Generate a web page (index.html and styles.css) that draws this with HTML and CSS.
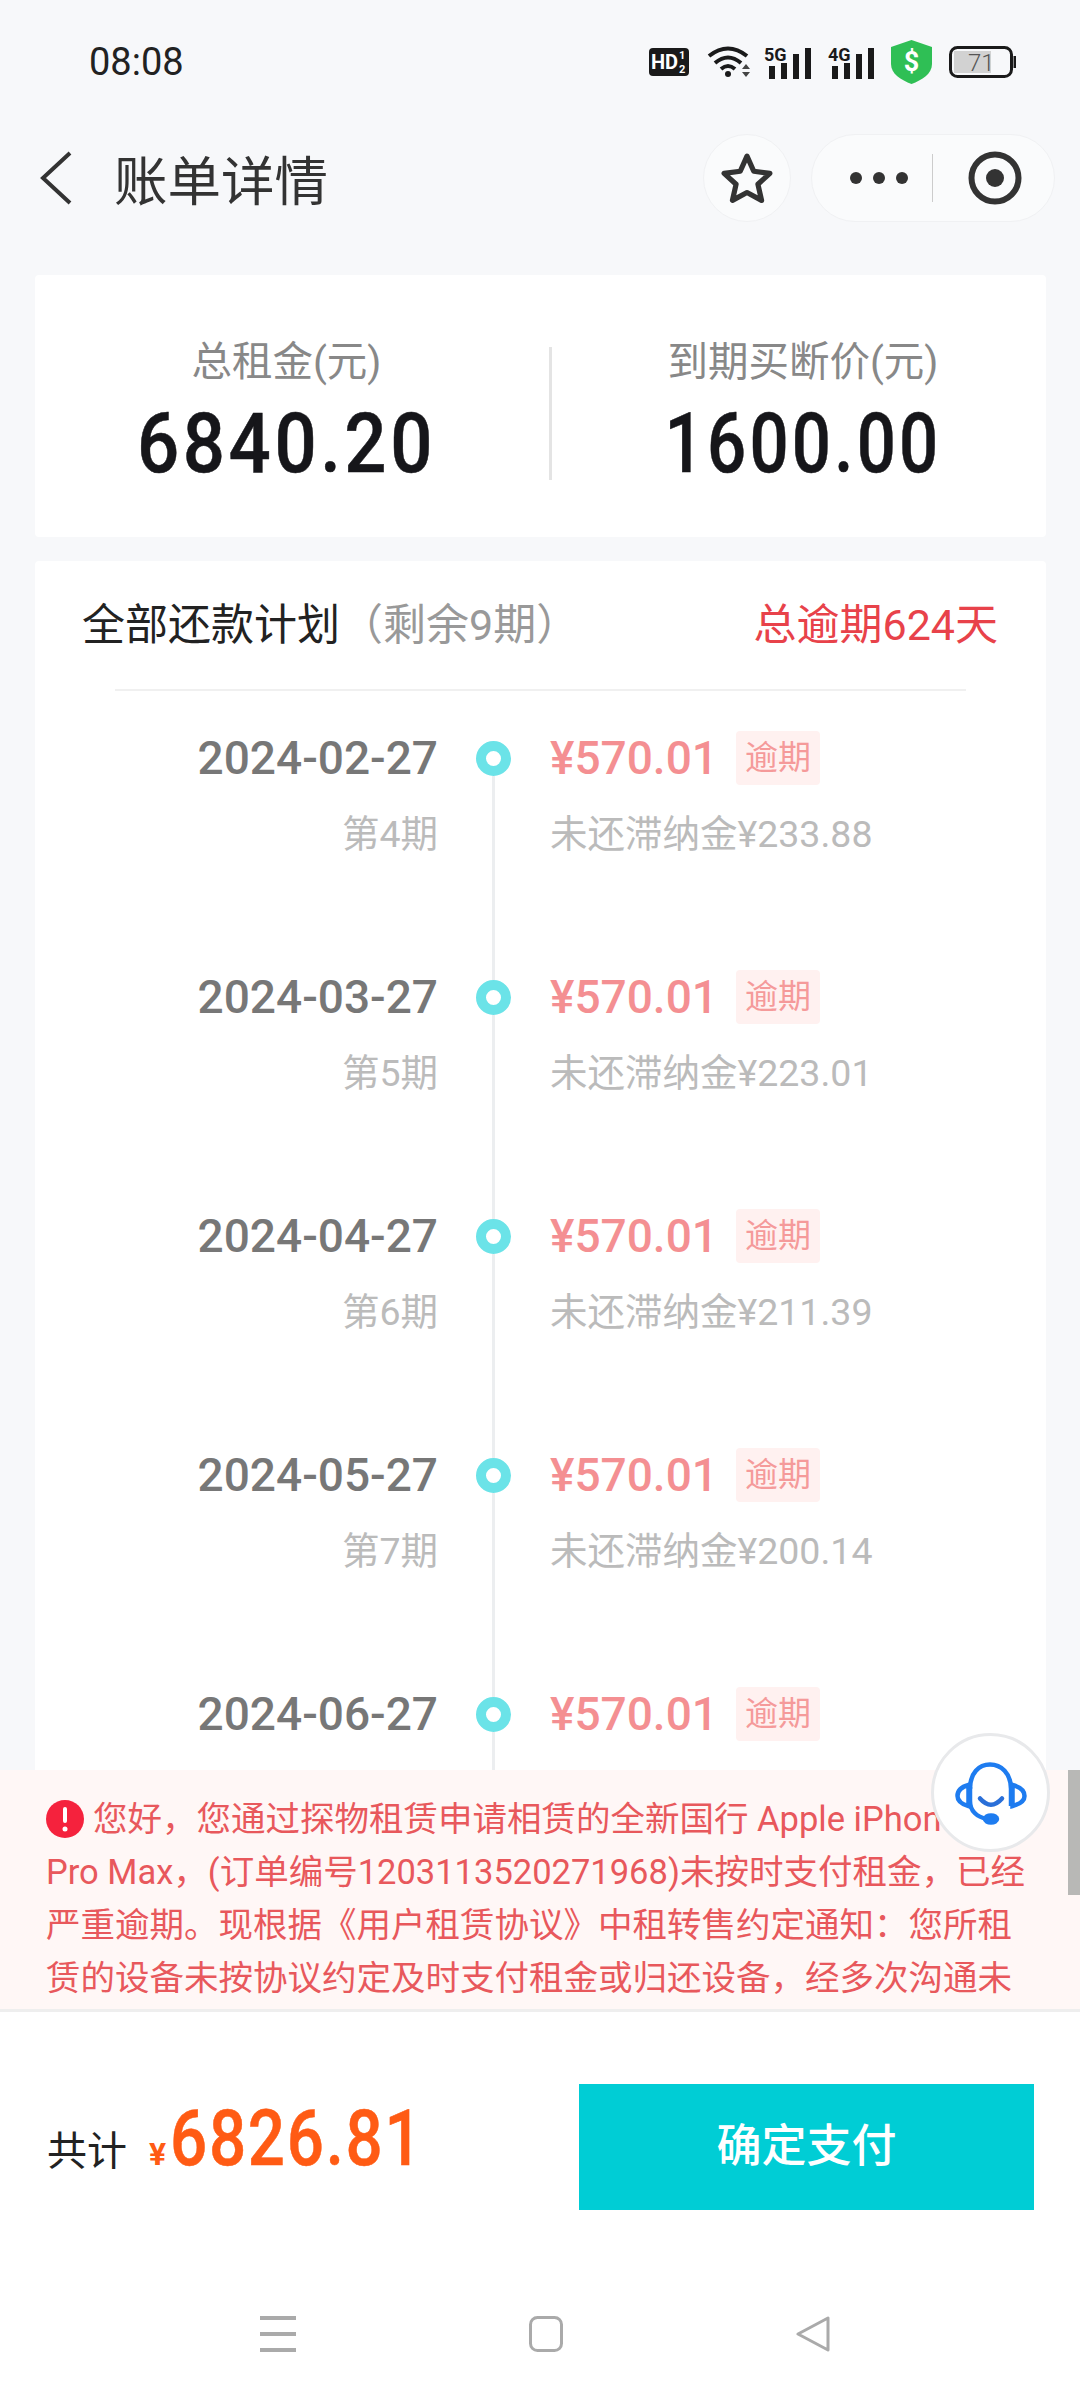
FILE: index.html
```html
<!DOCTYPE html>
<html lang="zh-CN">
<head>
  <meta charset="UTF-8">
  <title>账单详情</title>
  <link rel="stylesheet" href="styles.css">
</head>
<body>
<div class="phone">

  <div class="status">
    <span class="clock">08:08</span>
    <div class="status-icons">
      <svg class="ic-hd" width="40" height="28" viewBox="0 0 40 28">
        <rect width="40" height="28" rx="4" fill="#1a1a1a"/>
        <text x="2" y="21" class="ic-text" font-size="20" fill="#fff">HD</text>
        <text x="30" y="11" class="ic-text" font-size="11" fill="#fff">1</text>
        <text x="30" y="25" class="ic-text" font-size="11" fill="#fff">2</text>
      </svg>
      <svg class="ic-wifi" width="44" height="34" viewBox="0 0 44 34" fill="none" stroke="#1a1a1a" stroke-width="4">
        <path d="M2 11Q21-4 40 11"/>
        <path d="M8 18Q21 7 34 18"/>
        <path d="M14 24Q21 18 28 24"/>
        <circle cx="21" cy="29" r="3" fill="#1a1a1a" stroke="none"/>
        <path d="M39 19l-4 5h8zM35 27h8l-4 5z" fill="#444" stroke="none"/>
      </svg>
      <svg class="ic-signal" width="47" height="37" viewBox="0 -4 47 37">
        <text x="0" y="15" class="ic-text" font-size="18" fill="#1a1a1a">5G</text>
        <path d="M5 20h6v13H5zM17 17h6v16h-6zM29 8h6v25h-6zM41 2h6v31h-6z" fill="#1a1a1a"/>
      </svg>
      <svg class="ic-signal" width="46" height="37" viewBox="0 -4 46 37">
        <text x="0" y="15" class="ic-text" font-size="18" fill="#1a1a1a">4G</text>
        <path d="M4 20h6v13H4zM16 17h6v16h-6zM28 8h6v25h-6zM40 2h6v31h-6z" fill="#1a1a1a"/>
      </svg>
      <svg width="41" height="44" viewBox="0 0 41 44">
        <path d="M20.5 0L41 7V24C41 34 31 40 20.5 44C10 40 0 34 0 24V7Z" fill="#2fbf55"/>
        <text x="20.5" y="31" text-anchor="middle" class="ic-text" font-size="27" fill="#fff">$</text>
      </svg>
      <svg width="67" height="32" viewBox="0 0 67 32">
        <rect x="5" y="5" width="37" height="22" fill="#d2d2d2"/>
        <rect x="1.5" y="1.5" width="61" height="29" rx="7" fill="none" stroke="#1a1a1a" stroke-width="3"/>
        <rect x="64.5" y="10" width="2.5" height="12" fill="#1a1a1a"/>
        <text x="19" y="25" class="ic-batt" font-size="24" fill="#555">71</text>
      </svg>
    </div>
  </div>

  <div class="nav">
    <svg class="nav-back" width="32" height="54" viewBox="0 0 32 54" fill="none" stroke="#333" stroke-width="4">
      <path d="M30 2L3 27l27 25"/>
    </svg>
    <span class="nav-title">账单详情</span>
    <div class="nav-star">
      <svg width="52" height="52" viewBox="0 0 50 50" fill="none" stroke="#333" stroke-width="5" stroke-linejoin="round">
        <path d="M25 4l6.500 14.500 15.500 2-11.500 10.500 3.500 15.500L25 39l-14 7.500L14.500 31 3 20.500l15.500-2z"/>
      </svg>
    </div>
    <div class="capsule">
      <div class="capsule-dots"><i></i><i></i><i></i></div>
      <div class="capsule-line"></div>
      <svg class="capsule-target" width="54" height="54" viewBox="0 0 54 54">
        <circle cx="27" cy="27" r="23.500" fill="none" stroke="#333" stroke-width="6"/>
        <circle cx="27" cy="27" r="9" fill="#333"/>
      </svg>
    </div>
  </div>

  <div class="main">
    <div class="card stats">
      <div class="stat stat-left">
        <div class="stat-label">总租金(元)</div>
        <div class="stat-num">6840.20</div>
      </div>
      <div class="stat-line"></div>
      <div class="stat stat-right">
        <div class="stat-label">到期买断价(元)</div>
        <div class="stat-num">1600.00</div>
      </div>
    </div>

    <div class="card plan">
      <div class="plan-head">
        <span class="plan-title">全部还款计划<span class="plan-left">（剩余9期）</span></span>
        <span class="plan-late">总逾期624天</span>
      </div>
      <div class="plan-line"></div>

      <div class="row">
        <div class="row-date"><div class="date">2024-02-27</div><div class="sub">第4期</div></div>
        <div class="axis"><div class="dot"></div><div class="axis-line"></div></div>
        <div class="row-money">
          <div class="money-top"><span class="amount">¥570.01</span><span class="tag">逾期</span></div>
          <div class="sub">未还滞纳金¥233.88</div>
        </div>
      </div>
      <div class="row">
        <div class="row-date"><div class="date">2024-03-27</div><div class="sub">第5期</div></div>
        <div class="axis"><div class="dot"></div><div class="axis-line"></div></div>
        <div class="row-money">
          <div class="money-top"><span class="amount">¥570.01</span><span class="tag">逾期</span></div>
          <div class="sub">未还滞纳金¥223.01</div>
        </div>
      </div>
      <div class="row">
        <div class="row-date"><div class="date">2024-04-27</div><div class="sub">第6期</div></div>
        <div class="axis"><div class="dot"></div><div class="axis-line"></div></div>
        <div class="row-money">
          <div class="money-top"><span class="amount">¥570.01</span><span class="tag">逾期</span></div>
          <div class="sub">未还滞纳金¥211.39</div>
        </div>
      </div>
      <div class="row">
        <div class="row-date"><div class="date">2024-05-27</div><div class="sub">第7期</div></div>
        <div class="axis"><div class="dot"></div><div class="axis-line"></div></div>
        <div class="row-money">
          <div class="money-top"><span class="amount">¥570.01</span><span class="tag">逾期</span></div>
          <div class="sub">未还滞纳金¥200.14</div>
        </div>
      </div>
      <div class="row">
        <div class="row-date"><div class="date">2024-06-27</div></div>
        <div class="axis"><div class="dot"></div><div class="axis-line"></div></div>
        <div class="row-money">
          <div class="money-top"><span class="amount">¥570.01</span><span class="tag">逾期</span></div>
        </div>
      </div>
    </div>
  </div>

  <div class="notice">
    <svg class="notice-icon" width="38" height="38" viewBox="0 0 38 38">
      <circle cx="19" cy="19" r="19" fill="#f5223d"/>
      <rect x="17" y="7" width="4" height="16" rx="2" fill="#fff"/>
      <circle cx="19" cy="29" r="2.500" fill="#fff"/>
    </svg>您好，您通过探物租赁申请相赁的全新国行 Apple iPhone 14 Pro Max，(订单编号1203113520271968)未按时支付租金，已经严重逾期。现根据《用户租赁协议》中租转售约定通知：您所租赁的设备未按协议约定及时支付租金或归还设备，经多次沟通未
    <div class="notice-scroll"></div>
  </div>

  <div class="service">
    <svg width="72" height="64" viewBox="0 0 72 64" fill="none" stroke="#1e7cf0" stroke-width="4.500">
      <path d="M15 28C15 12 24 3.500 35 3.500S56 12 56 28V45"/>
      <path d="M15 26V40C15 50 22 56 32 58"/>
      <path d="M13.500 24C6 26 2.500 30 2.500 35S6 43 13.500 45Z"/>
      <path d="M57.500 24C65 26 69.500 30 69.500 35S65 43 57.500 45Z"/>
      <path d="M25 37.500Q36 50 47 37.500" stroke="#2a6fd8" stroke-linecap="round"/>
      <ellipse cx="36" cy="58" rx="6" ry="3.500" fill="#1e7cf0"/>
    </svg>
  </div>

  <div class="footer">
    <div class="total">
      <span class="total-label">共计</span>
      <span class="total-yen">¥</span>
      <span class="total-num">6826.81</span>
    </div>
    <div class="pay">确定支付</div>
  </div>

  <div class="sysnav">
    <svg width="36" height="36" viewBox="0 0 36 36" fill="#aaa">
      <rect y="0" width="36" height="4"/>
      <rect y="16" width="36" height="4"/>
      <rect y="32" width="36" height="4"/>
    </svg>
    <svg width="34" height="36" viewBox="0 0 34 36" fill="none" stroke="#aaa" stroke-width="3">
      <rect x="1.500" y="1.500" width="31" height="33" rx="7"/>
    </svg>
    <svg width="34" height="36" viewBox="0 0 34 36" fill="none" stroke="#aaa" stroke-width="3" stroke-linejoin="round">
      <path d="M32 2V34L2 18Z"/>
    </svg>
  </div>

</div>
</body>
</html>
```

FILE: styles.css
```css
* {
  box-sizing: border-box;
}

body {
  margin: 0;
  font-family: Roboto, "Noto Sans CJK SC", sans-serif;
  background: #fff;
}

.phone {
  position: relative;
  width: 1080px;
  height: 2400px;
  overflow: hidden;
  background: #f7f8fa;
}

/* status bar */
.status {
  display: flex;
  justify-content: space-between;
  align-items: center;
  height: 124px;
  padding: 0 64px 0 89px;
}

.clock {
  font-size: 38px;
  color: #222;
}

.status-icons {
  display: flex;
  align-items: center;
  gap: 17px;
}

.ic-hd {
  margin-right: 1px;
}

.ic-wifi {
  margin-right: -4px;
}

.ic-signal {
  margin-top: -4px;
}

.ic-text {
  font-family: Roboto, sans-serif;
  font-weight: 700;
}

.ic-batt {
  font-family: Roboto, sans-serif;
  font-weight: 300;
}

/* title bar */
.nav {
  display: flex;
  align-items: center;
  height: 108px;
  padding: 0 25px 0 40px;
}

.nav-title {
  margin-left: 42px;
  margin-top: -2px;
  font-size: 53.5px;
  color: #333;
}

.nav-star {
  display: flex;
  align-items: center;
  justify-content: center;
  width: 88px;
  height: 88px;
  margin-left: auto;
  background: #fafbfc;
  border: 1px solid #f0f1f3;
  border-radius: 50%;
}

.capsule {
  display: flex;
  align-items: center;
  width: 244px;
  height: 88px;
  margin-left: 20px;
  padding: 0 0 0 38px;
  background: #fafbfc;
  border: 1px solid #f0f1f3;
  border-radius: 44px;
}

.capsule-dots {
  display: flex;
  gap: 11px;
}

.capsule-dots i {
  width: 12px;
  height: 12px;
  background: #333;
  border-radius: 50%;
}

.capsule-line {
  width: 1px;
  height: 48px;
  margin: 0 35px 0 24px;
  background: #ccc;
}

.capsule-target {
  flex: none;
}

/* content */
.main {
  height: 1538px;
  padding: 43px 34px 0 35px;
  overflow: hidden;
}

.card {
  background: #fff;
  border-radius: 4px;
}

.stats {
  display: flex;
  align-items: center;
  height: 262px;
  margin-bottom: 24px;
  padding-top: 14px;
}

.stat {
  text-align: center;
}

.stat-left {
  width: 504px;
  padding-left: 3px;
}

.stat-right {
  width: 494px;
  padding-left: 4px;
}

.stat-line {
  width: 3px;
  height: 133px;
  margin: 0 4px 0 14px;
  background: #e4e4e4;
}

.stat-label {
  font-size: 40.5px;
  line-height: 60px;
  color: #888;
}

.stat-num {
  margin-top: 2px;
  font-size: 84px;
  line-height: 100px;
  font-weight: 500;
  letter-spacing: 4px;
  color: #16161a;
  -webkit-text-stroke: .5px #16161a;
  transform: scaleX(.885);
}

.stat-right .stat-num {
  transform: scaleX(.82);
}

.plan-head {
  display: flex;
  justify-content: space-between;
  align-items: center;
  height: 128px;
  padding: 0 48px 8px 47px;
  font-size: 43px;
}

.plan-title {
  color: #222;
}

.plan-left {
  color: #999;
}

.plan-late {
  color: #e8424a;
}

.plan-line {
  height: 2px;
  margin: 0 80px 50px;
  background: #f0f0f0;
}

.row {
  display: flex;
  height: 239px;
}

.row-date {
  width: 403px;
  margin-top: -20px;
  text-align: right;
}

.date {
  font-size: 46px;
  line-height: 74px;
  font-weight: 500;
  color: #777;
}

.sub {
  padding-top: 2px;
  font-size: 37.5px;
  line-height: 74px;
  color: #bbb;
}

.axis {
  display: flex;
  flex-direction: column;
  align-items: center;
  width: 36px;
  margin: 0 39px 0 37px;
}

.dot {
  flex: none;
  width: 35px;
  height: 35px;
  border: 10px solid #6be3e8;
  border-radius: 50%;
}

.axis-line {
  flex: 1;
  width: 3px;
  background: #eceef0;
}

.row-money {
  margin-top: -20px;
}

.money-top {
  display: flex;
  align-items: center;
  height: 74px;
}

.amount {
  font-size: 46px;
  font-weight: 500;
  color: #f48f92;
}

.tag {
  margin-left: 18px;
  padding: 0 9px;
  font-size: 33px;
  line-height: 54px;
  color: #f59a9a;
  background: #fff1f0;
  border-radius: 4px;
}

/* red notice */
.notice {
  position: relative;
  height: 242px;
  padding: 23px 46px 0;
  overflow: hidden;
  font-size: 34.5px;
  line-height: 53px;
  color: #e8585c;
  background: #fff7f6;
  border-bottom: 3px solid #eee;
}

.notice-icon {
  margin-right: 9px;
  vertical-align: -7px;
}

.notice-scroll {
  position: absolute;
  top: 0;
  right: 0;
  width: 12px;
  height: 125px;
  background: #b8b8b6;
}

.service {
  position: absolute;
  left: 931px;
  top: 1733px;
  display: flex;
  align-items: center;
  justify-content: center;
  width: 119px;
  height: 119px;
  background: #fff;
  border: 3px solid #e8e9eb;
  border-radius: 50%;
}

/* bottom bar */
.footer {
  display: flex;
  justify-content: space-between;
  align-items: center;
  height: 268px;
  padding: 72px 46px 70px 47px;
  background: #fff;
}

.total {
  display: flex;
  align-items: baseline;
  margin-top: -18px;
}

.total-label {
  font-size: 40px;
  color: #222;
}

.total-yen {
  margin-left: 22px;
  font-size: 32px;
  font-weight: 700;
  color: #ff5b14;
}

.total-num {
  margin-left: 4px;
  font-size: 78px;
  font-weight: 500;
  letter-spacing: 2px;
  color: #ff5b14;
  -webkit-text-stroke: .5px #ff5b14;
  transform: scaleX(.84);
  transform-origin: left;
}

.pay {
  width: 455px;
  height: 126px;
  font-size: 45px;
  line-height: 126px;
  font-weight: 500;
  text-align: center;
  color: #fff;
  background: #00cdd5;
}

.sysnav {
  display: flex;
  align-items: center;
  gap: 233px;
  height: 120px;
  padding: 0 0 12px 260px;
  background: #fff;
}
```
